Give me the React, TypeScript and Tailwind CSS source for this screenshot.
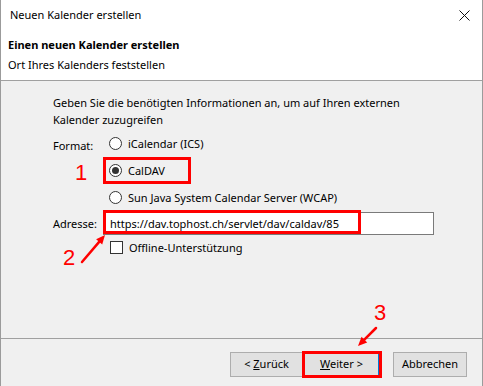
import React from "react";

const font = { fontFamily: '"Noto Sans", "Open Sans", sans-serif' };

function Radio({ checked, label }: { checked?: boolean; label: string }) {
  return (
    <div className="flex h-[27px] items-center gap-[6px]">
      <span className="flex h-[13px] w-[13px] items-center justify-center rounded-full border border-[#333] bg-white">
        {checked && <span className="h-[7px] w-[7px] rounded-full bg-[#333]" />}
      </span>
      <span>{label}</span>
    </div>
  );
}

function Arrow({ x1, y1, x2, y2 }: { x1: number; y1: number; x2: number; y2: number }) {
  // red annotation arrow with filled head at (x2, y2)
  const ang = Math.atan2(y2 - y1, x2 - x1);
  const len = 9;
  const w = 4;
  const bx = x2 - len * Math.cos(ang);
  const by = y2 - len * Math.sin(ang);
  const px = -Math.sin(ang) * w;
  const py = Math.cos(ang) * w;
  return (
    <g>
      <line x1={x1} y1={y1} x2={bx} y2={by} stroke="#f00" strokeWidth="2.5" strokeLinecap="round" />
      <polygon points={`${x2},${y2} ${bx + px},${by + py} ${bx - px},${by - py}`} fill="#f00" />
    </g>
  );
}

export default function App() {
  return (
    <div
      className="relative flex h-[386px] w-[483px] flex-col overflow-hidden border-x border-[#9b9b9b] bg-[#f0f0f0] text-[11px] text-black"
      style={font}
    >
      {/* title bar */}
      <div className="flex h-[31px] items-center justify-between bg-white pl-[9px] pr-[12px]">
        <span>Neuen Kalender erstellen</span>
        <svg width="11" height="11" viewBox="0 0 11 11">
          <path d="M0.5 0.5 L10.5 10.5 M10.5 0.5 L0.5 10.5" stroke="#111" strokeWidth="1" />
        </svg>
      </div>

      {/* header */}
      <div className="flex h-[49px] flex-col bg-white pl-[7px] pt-[4px] leading-[20px]">
        <span className="font-bold">Einen neuen Kalender erstellen</span>
        <span>Ort Ihres Kalenders feststellen</span>
      </div>
      <div className="h-px bg-[#a0a0a0]" />

      {/* content */}
      <div className="flex h-[257px] flex-col pl-[52px] pt-[13px] leading-[17px]">
        <p>
          Geben Sie die benötigten Informationen an, um auf Ihren externen
          <br />
          Kalender zuzugreifen
        </p>
        <div className="mt-[6px] flex">
          <span className="w-[56px] pt-[3px]">Format:</span>
          <div className="-mt-[4px] flex flex-col">
            <Radio label="iCalendar (ICS)" />
            <Radio checked label="CalDAV" />
            <Radio label="Sun Java System Calendar Server (WCAP)" />
          </div>
        </div>
        <div className="mt-[1px] flex items-center">
          <span className="w-[50px]">Adresse:</span>
          <div className="flex h-[23px] w-[331px] items-center border border-[#7a7a7a] bg-white px-[6px]">
            https://dav.tophost.ch/servlet/dav/caldav/85
          </div>
        </div>
        <div className="ml-[57px] mt-[4px] flex items-center gap-[6px]">
          <span className="h-[13px] w-[13px] border border-[#333] bg-white" />
          <span>Offline-Unterstützung</span>
        </div>
      </div>
      <div className="h-px bg-[#a0a0a0]" />

      {/* buttons */}
      <div className="flex flex-1 items-start justify-end pr-[15px] pt-[13px]">
        <button className="h-[25px] w-[73px] border border-[#adadad] bg-[#e1e1e1]">
          &lt; <span className="underline">Z</span>urück
        </button>
        <button className="ml-px h-[25px] w-[75px] border border-[#0078d7] bg-[#e1e1e1]">
          <span className="underline">W</span>eiter &gt;
        </button>
        <button className="ml-[14px] h-[25px] w-[74px] border border-[#adadad] bg-[#e1e1e1]">
          Abbrechen
        </button>
      </div>

      {/* annotations */}
      <div className="pointer-events-none absolute left-[102px] top-[157px] h-[27px] w-[88px] border-[3px] border-[#f00]" />
      <div className="pointer-events-none absolute left-[102px] top-[210px] h-[24px] w-[258px] border-[3px] border-[#f00]" />
      <div className="pointer-events-none absolute left-[301px] top-[351px] h-[27px] w-[80px] border-[3px] border-[#f00]" />
      <span
        className="absolute left-[74px] top-[160px] text-[22px] leading-[26px] text-[#f00]"
        style={{ fontFamily: '"Liberation Sans", sans-serif' }}
      >
        1
      </span>
      <span
        className="absolute left-[62px] top-[245px] text-[22px] leading-[26px] text-[#f00]"
        style={{ fontFamily: '"Liberation Sans", sans-serif' }}
      >
        2
      </span>
      <span
        className="absolute left-[373px] top-[300px] text-[22px] leading-[26px] text-[#f00]"
        style={{ fontFamily: '"Liberation Sans", sans-serif' }}
      >
        3
      </span>
      <svg className="pointer-events-none absolute left-0 top-0" width="483" height="386">
        <Arrow x1={81} y1={262} x2={104} y2={235} />
        <Arrow x1={375} y1={328} x2={357} y2={346} />
      </svg>
    </div>
  );
}
